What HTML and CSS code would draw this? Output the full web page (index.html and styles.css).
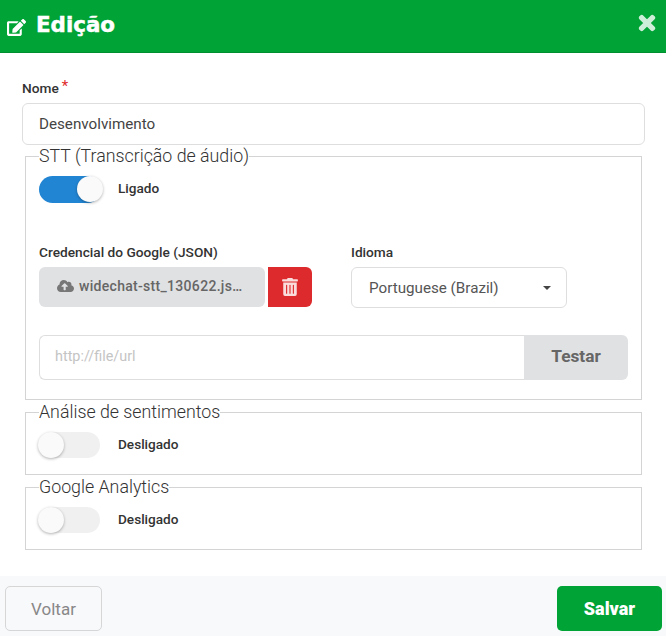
FILE: index.html
```html
<!DOCTYPE html>
<html lang="pt-BR">
<head>
<meta charset="utf-8">
<title>Edição</title>
<link rel="stylesheet" href="styles.css">
</head>
<body>
<div class="modal">
  <header class="head">
    <svg class="edit-icon" viewBox="0 0 576 512" aria-hidden="true"><path d="M402.6 83.2l90.2 90.2c3.8 3.8 3.8 10 0 13.8L274.4 405.6l-92.8 10.3c-12.4 1.4-22.9-9.1-21.5-21.5l10.3-92.8L388.8 83.2c3.8-3.8 10-3.8 13.8 0zm162-22.9l-48.8-48.8c-15.2-15.2-39.9-15.2-55.2 0l-35.4 35.4c-3.8 3.8-3.8 10 0 13.8l90.2 90.2c3.8 3.8 10 3.8 13.8 0l35.4-35.4c15.2-15.3 15.2-40 0-55.2zM384 346.2V448H64V128h229.8c3.2 0 6.2-1.3 8.5-3.5l40-40c7.6-7.6 2.2-20.5-8.5-20.5H48C21.5 64 0 85.5 0 112v352c0 26.5 21.5 48 48 48h352c26.5 0 48-21.5 48-48V306.2c0-10.7-12.9-16-20.5-8.5l-40 40c-2.2 2.3-3.5 5.3-3.5 8.5z"/></svg>
    <h1 class="title">Edição</h1>
    <svg class="close-icon" viewBox="0 0 352 512" aria-hidden="true"><path d="M242.7 256l100.1-100.1c12.3-12.3 12.3-32.2 0-44.5l-22.2-22.2c-12.3-12.3-32.2-12.3-44.5 0L176 189.3 75.9 89.2c-12.3-12.3-32.2-12.3-44.5 0L9.2 111.4c-12.3 12.3-12.3 32.2 0 44.5L109.3 256 9.2 356.1c-12.3 12.3-12.3 32.2 0 44.5l22.2 22.2c12.3 12.3 32.2 12.3 44.5 0L176 322.7l100.1 100.1c12.3 12.3 32.2 12.3 44.5 0l22.2-22.2c12.3-12.3 12.3-32.2 0-44.5L242.7 256z"/></svg>
  </header>

  <main class="body">
    <div class="name-label"><span class="label">Nome</span><span class="req">*</span></div>
    <div class="text-input name-input">Desenvolvimento</div>

    <fieldset class="group group-stt">
      <legend>STT (Transcrição de áudio)</legend>
      <div class="switch-row">
        <span class="switch on"><span class="knob"></span></span>
        <span class="switch-text">Ligado</span>
      </div>
      <div class="cred-row">
        <div class="cred-col">
          <div class="label">Credencial do Google (JSON)</div>
          <div class="file-row">
            <div class="file-btn">
              <svg class="cloud-icon" viewBox="0 0 640 512" aria-hidden="true"><path d="M537.6 226.6c4.1-10.7 6.4-22.4 6.4-34.6 0-53-43-96-96-96-19.7 0-38.1 6-53.3 16.2C367 64.2 315.3 32 256 32c-88.4 0-160 71.6-160 160 0 2.7.1 5.4.2 8.1C40.2 219.8 0 273.2 0 336c0 79.5 64.5 144 144 144h368c70.7 0 128-57.3 128-128 0-61.9-44-113.6-102.4-125.4zM393.4 288H328v112c0 8.8-7.2 16-16 16h-48c-8.8 0-16-7.2-16-16V288h-65.4c-14.3 0-21.4-17.2-11.3-27.3l105.4-105.4c6.2-6.2 16.4-6.2 22.6 0l105.4 105.4c10.1 10.1 2.9 27.3-11.3 27.3z"/></svg>
              <span>widechat-stt_130622.js…</span>
            </div>
            <div class="del-btn">
              <svg class="trash-icon" viewBox="0 0 448 512" aria-hidden="true"><path d="M32 464a48 48 0 0 0 48 48h288a48 48 0 0 0 48-48V128H32zm272-256a16 16 0 0 1 32 0v224a16 16 0 0 1-32 0zm-96 0a16 16 0 0 1 32 0v224a16 16 0 0 1-32 0zm-96 0a16 16 0 0 1 32 0v224a16 16 0 0 1-32 0zM432 32H312l-9.4-18.7A24 24 0 0 0 281.1 0H166.8a23.72 23.72 0 0 0-21.4 13.3L136 32H16A16 16 0 0 0 0 48v32a16 16 0 0 0 16 16h416a16 16 0 0 0 16-16V48a16 16 0 0 0-16-16z"/></svg>
            </div>
          </div>
        </div>
        <div class="lang-col">
          <div class="label">Idioma</div>
          <div class="select"><span>Portuguese (Brazil)</span><span class="caret"></span></div>
        </div>
      </div>
      <div class="url-row">
        <div class="url-input">http://file/url</div>
        <div class="test-btn">Testar</div>
      </div>
    </fieldset>

    <fieldset class="group group-mid">
      <legend>Análise de sentimentos</legend>
      <div class="switch-row">
        <span class="switch"><span class="knob"></span></span>
        <span class="switch-text">Desligado</span>
      </div>
    </fieldset>

    <fieldset class="group group-last">
      <legend>Google Analytics</legend>
      <div class="switch-row">
        <span class="switch"><span class="knob"></span></span>
        <span class="switch-text">Desligado</span>
      </div>
    </fieldset>
  </main>

  <footer class="foot">
    <div class="back-btn">Voltar</div>
    <div class="save-btn">Salvar</div>
  </footer>
</div>
</body>
</html>
```
FILE: styles.css
```css
* { box-sizing: border-box; }
html, body { margin: 0; padding: 0; background: #fff; }
body { font-family: Roboto, "Liberation Sans", sans-serif; color: #333; }
.modal { width: 666px; height: 636px; display: flex; flex-direction: column; overflow: hidden; }

.head {
  height: 53px; background: #00a335; border-bottom: 1px solid #008f2e;
  display: flex; align-items: center; padding: 0 9px 6px 7px; flex: none;
}
.edit-icon { width: 19px; height: 17px; fill: #fff; margin-top: 8px; margin-right: 10px; }
.title { margin: 0; font-family: "DejaVu Sans", sans-serif; font-size: 21.4px; font-weight: 700; color: #fff; line-height: 26px; flex: 1; margin-top: 3px; -webkit-text-stroke: 0.5px #fff; }
.close-icon { width: 18px; height: 22px; fill: #cdeed8; stroke: #cdeed8; stroke-width: 30; margin-left: -1px; margin-right: 1px; }

.body { flex: 1; padding: 26px 21px 0 22px; }
.name-label { height: 24px; display: flex; align-items: flex-start; }
.label { font-size: 13.7px; font-weight: 500; color: #333; line-height: 18px; }
.req { color: #e02b2b; font-size: 15px; line-height: 14px; margin-left: 3px; }
.text-input {
  height: 42px; border: 1px solid #dedede; border-radius: 6px; padding: 0 16px;
  display: flex; align-items: center; font-size: 15.2px; color: #444;
}
.name-input { margin-bottom: 1px; }
.group { margin: 0 3px; padding: 0 13px; border: 1px solid #d4d4d4; min-width: 0; height: 73px; }
.group legend { padding: 0; font-size: 17.8px; font-weight: 300; color: #333; line-height: 20px; }
.group-stt { height: 254px; }
.group-mid { margin-top: 2px; }
.group-last { margin-top: 2px; }

.switch-row { display: flex; align-items: center; height: 27px; margin-top: 10px; }
.group-mid .switch-row, .group-last .switch-row { margin-top: 9px; }
.switch { width: 61px; height: 26px; border-radius: 14px; background: #f0f0f0; position: relative; flex: none; }
.switch.on { width: 62px; height: 27px; background: #2285d3; }
.knob {
  position: absolute; top: 0; left: -1px; width: 26px; height: 26px; border-radius: 50%;
  background: #fafafa; box-shadow: 0 1px 3px rgba(0,0,0,.3);
}
.switch.on .knob { left: 38px; }
.switch-text { margin-left: 18px; font-size: 13.6px; font-weight: 500; color: #333; margin-top: -1px; }
.switch.on + .switch-text { margin-left: 17px; margin-top: -3px; }

.cred-row { display: flex; margin-top: 40px; }
.cred-col { width: 312px; }
.lang-col { width: 216px; }
.cred-col .label, .lang-col .label { height: 18px; margin-bottom: 6px; }
.file-row { display: flex; gap: 3px; }
.file-btn {
  width: 226px; height: 40px; background: #e0e1e3; border-radius: 6px; display: flex; align-items: center;
  padding: 0 0 2px 18px; font-size: 14px; font-weight: 500; color: #666; letter-spacing: 0.3px; white-space: nowrap;
}
.cloud-icon { width: 17px; height: 14px; fill: #777; margin-right: 5px; flex: none; }
.del-btn { width: 44px; height: 40px; background: #dd2a2c; border-radius: 0 6px 6px 0; display: flex; align-items: center; justify-content: center; }
.trash-icon { width: 16px; height: 18px; fill: #fbdcdc; }
.select {
  height: 41px; border: 1px solid #dedede; border-radius: 6px; display: flex; align-items: center; justify-content: space-between;
  padding: 0 15px 0 17px; font-size: 15.2px; color: #555;
}
.caret { width: 0; height: 0; border-left: 4px solid transparent; border-right: 4px solid transparent; border-top: 4px solid #444; }

.url-row { display: flex; margin-top: 27px; height: 45px; }
.url-input {
  width: 485px; border: 1px solid #dedede; border-right: 0; border-radius: 6px 0 0 6px;
  display: flex; align-items: center; padding: 0 0 2px 15px; font-size: 14.4px; color: #c4c4c4;
}
.test-btn {
  width: 104px; background: #e0e1e3; border-radius: 0 6px 6px 0; display: flex; align-items: center; justify-content: center;
  padding-bottom: 4px; font-size: 17.3px; font-weight: 700; color: #666;
}

.foot {
  height: 60px; background: #f8f9fb; flex: none; display: flex; justify-content: space-between; align-items: flex-start;
  padding: 10px 4px 0 5px;
}
.back-btn {
  width: 97px; height: 45px; border: 1px solid #d6d6d6; border-radius: 5px; display: flex; align-items: center; justify-content: center;
  font-size: 17px; color: #888;
}
.save-btn {
  width: 105px; height: 45px; background: #00a335; border-radius: 5px; display: flex; align-items: center; justify-content: center;
  font-size: 18px; font-weight: 900; color: #fff;
}
```
